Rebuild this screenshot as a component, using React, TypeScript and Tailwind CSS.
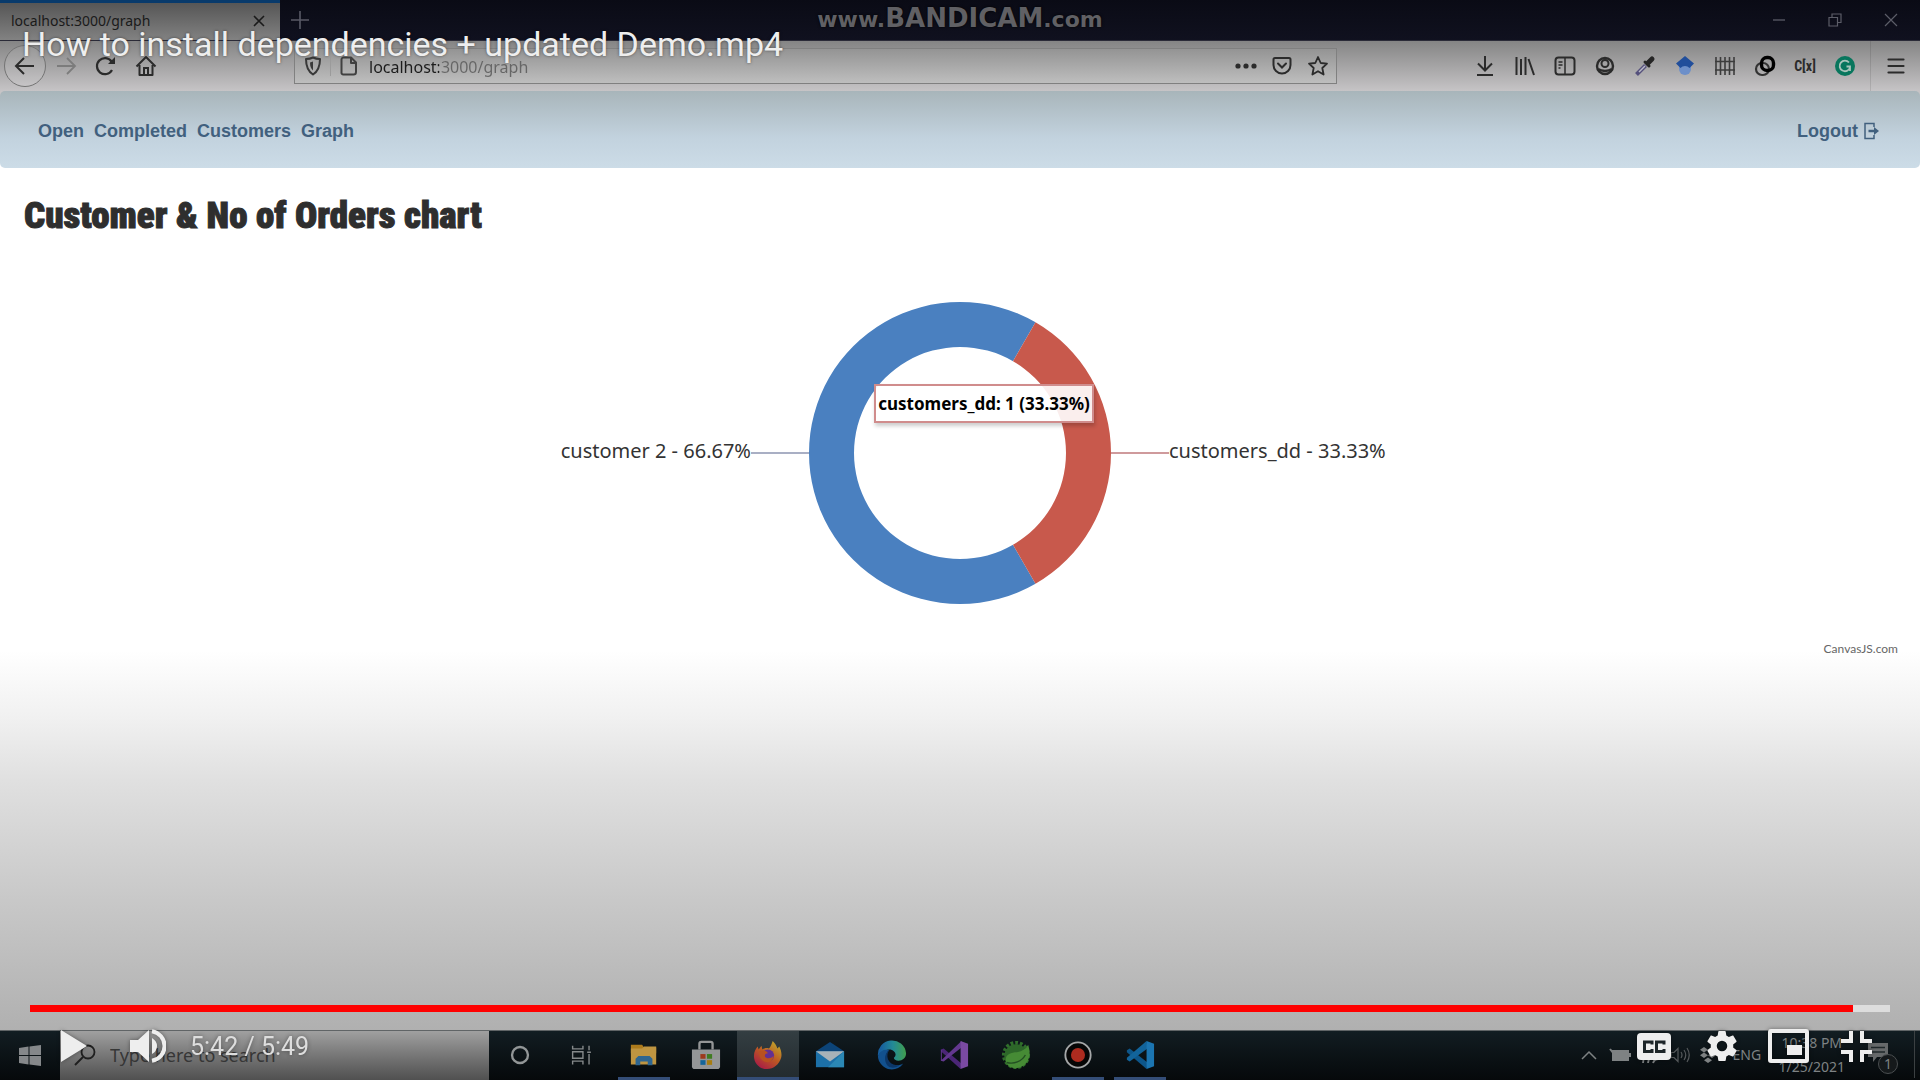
import React, { useState } from "react";

type IconProps = { children: React.ReactNode; w?: number; h?: number; box?: string; className?: string };

function Icon({ children, w = 22, h = 22, box = "0 0 22 22", className = "" }: IconProps) {
  return (
    <svg width={w} height={h} viewBox={box} fill="none" stroke="currentColor" strokeWidth={2} className={"shrink-0 " + className} aria-hidden="true">
      {children}
    </svg>
  );
}

function ToolButton({ label, children, className = "" }: { label: string; children: React.ReactNode; className?: string }) {
  return (
    <button type="button" aria-label={label} className={"flex h-10 w-10 shrink-0 items-center justify-center " + className}>
      {children}
    </button>
  );
}

function TabStrip() {
  return (
    <header className="flex h-[41px] items-stretch border-b border-[#2b2b38] bg-linear-to-b from-[#0a0b15] to-[#10111f]">
      <div className="flex w-[280px] items-center justify-between border-t-[3px] border-[#083a6b] bg-linear-to-b from-[#565656] to-[#828282] pr-3 pb-px pl-[11px] text-[#1a1a1a]">
        <span className="text-sm leading-none">localhost:3000/graph</span>
        <button type="button" aria-label="Close tab">
          <Icon w={18} h={18} box="0 0 18 18"><path d="M4 4l10 10M14 4L4 14" strokeWidth={1.6} /></Icon>
        </button>
      </div>
      <ToolButton label="New tab" className="text-[#595a66]">
        <Icon w={18} h={18} box="0 0 18 18"><path d="M9 0v18M0 9h18" strokeWidth={1.6} /></Icon>
      </ToolButton>
      <div className="ml-auto flex pr-px text-[#5c5d68]">
        <button type="button" aria-label="Minimize" className="flex w-14 items-center justify-center">
          <Icon w={14} h={14} box="0 0 14 14"><path d="M1 7h12" strokeWidth={1.3} /></Icon>
        </button>
        <button type="button" aria-label="Restore" className="flex w-14 items-center justify-center">
          <Icon w={14} h={14} box="0 0 14 14"><path d="M1 4.5h8.500v8.500H1zM4 4.500V1h9v8.500h-3.500" strokeWidth={1.2} /></Icon>
        </button>
        <button type="button" aria-label="Close" className="flex w-14 items-center justify-center">
          <Icon w={14} h={14} box="0 0 14 14"><path d="M1 1l12 12M13 1L1 13" strokeWidth={1.2} /></Icon>
        </button>
      </div>
    </header>
  );
}

function Toolbar() {
  return (
    <div className="flex h-[50px] items-center bg-linear-to-b from-[#858585] to-[#c6c4c6] px-1 text-[#2b2b2b]">
      <button type="button" aria-label="Back" className="flex h-[42px] w-[42px] shrink-0 items-center justify-center rounded-full border border-[#747474] bg-white/10">
        <Icon><path d="M20 11H2M10 3l-8 8 8 8" /></Icon>
      </button>
      <ToolButton label="Forward" className="text-[#7c7c7c]"><Icon><path d="M2 11h18M12 3l8 8-8 8" strokeWidth={1.8} /></Icon></ToolButton>
      <ToolButton label="Reload">
        <Icon><path d="M17 15a8 8 0 1 1-.5-8.500" strokeWidth={2.2} /><path d="M13 9h7V2z" fill="currentColor" stroke="none" /></Icon>
      </ToolButton>
      <ToolButton label="Home">
        <Icon><path d="M1.500 11.500L11 2l9.500 9.500M4.500 10v10h13V10" strokeLinejoin="round" /><path d="M9 19v-6h4v6" /></Icon>
      </ToolButton>
      <div className="mx-32 flex h-9 flex-1 items-center border border-[#808080] bg-linear-to-b from-[#949494] to-[#bebebe]">
        <div className="flex w-9 justify-center border-r border-[#9b9b9b] text-[#383838]">
          <Icon w={18} h={20} box="0 0 18 20"><path d="M9 1.500c2 1 4.500 1.500 7 1.500 0 7-1.500 12-7 15.500C3.500 15 2 10 2 3c2.500 0 5-.5 7-1.500z" strokeLinejoin="round" /><path d="M9 5.500v9c-2-2-3-4-3-8z" fill="currentColor" stroke="none" /></Icon>
        </div>
        <div className="flex w-9 justify-center text-[#404040]">
          <Icon w={18} h={20} box="0 0 18 20"><path d="M3.500 1.500H11l5 5V16a2.500 2.500 0 0 1-2.500 2.500h-10A2 2 0 0 1 1.500 16V3.500a2 2 0 0 1 2-2zM11 1.500V7h5" strokeLinejoin="round" /></Icon>
        </div>
        <input
          aria-label="Address"
          defaultValue="localhost:3000/graph"
          className="min-w-0 flex-1 bg-[linear-gradient(to_right,#1c1c1c_72px,#666_72px)] bg-clip-text pt-0.5 pl-0.5 text-base text-transparent outline-none"
        />
        <button type="button" aria-label="Page actions" className="flex w-9 justify-center">
          <Icon w={22} h={6} box="0 0 22 6"><g fill="currentColor" stroke="none"><circle cx="3" cy="3" r="2.600" /><circle cx="11" cy="3" r="2.600" /><circle cx="19" cy="3" r="2.600" /></g></Icon>
        </button>
        <button type="button" aria-label="Save to Pocket" className="flex w-9 justify-center">
          <Icon w={20} h={20} box="0 0 20 20"><path d="M3 2h14a1.500 1.500 0 0 1 1.500 1.500V9a8.500 8.500 0 0 1-17 0V3.500A1.500 1.500 0 0 1 3 2z" /><path d="M6 7.500l4 4 4-4" strokeLinecap="round" /></Icon>
        </button>
        <button type="button" aria-label="Bookmark this page" className="flex w-9 justify-center">
          <Icon w={22} h={22}><path d="M11 2l2.700 6 6.300.7-4.700 4.300 1.300 6.500L11 16.200 5.400 19.500 6.700 13 2 8.700 8.300 8z" strokeWidth={1.8} strokeLinejoin="round" /></Icon>
        </button>
      </div>
      <ToolButton label="Downloads"><Icon><path d="M11 1v14M4 8.500l7 7 7-7M3 20h16" /></Icon></ToolButton>
      <ToolButton label="Library"><Icon><path d="M2.500 2v18M7 4v16M11.500 2v18M14.500 4l5.500 16" /></Icon></ToolButton>
      <ToolButton label="Sidebars">
        <Icon><rect x="1.500" y="2.500" width="19" height="17" rx="3" /><path d="M11 3v16M4.500 7h4M4.500 10h4M4.500 13h2" strokeWidth={1.5} /></Icon>
      </ToolButton>
      <ToolButton label="Account">
        <Icon><circle cx="11" cy="11" r="8" strokeWidth={2.400} /><circle cx="11" cy="8.500" r="3.500" /><path d="M4 14c4 2.500 10 2.500 14 0" strokeWidth={2.500} /></Icon>
      </ToolButton>
      <ToolButton label="Color picker">
        <Icon><path d="M2.500 19.500l9-9" stroke="#55507c" strokeWidth={4} /><path d="M5 17l6-6" stroke="#b9b9c6" strokeWidth={1.500} /><path d="M11 7l4 4" stroke="#252525" strokeWidth={3} strokeLinecap="round" /><path d="M14 8l4-4" stroke="#252525" strokeWidth={5} strokeLinecap="round" /></Icon>
      </ToolButton>
      <ToolButton label="Scholar">
        <Icon><g stroke="none"><path d="M5 10v4a6 6 0 0 0 12 0v-4z" fill="#6d8fc9" /><path d="M11 1l9 7.500-4.500 4.500a6 6 0 0 0-9 0L2 8.500z" fill="#214e9b" /></g></Icon>
      </ToolButton>
      <ToolButton label="Grid">
        <Icon><path d="M2 2v18M6.500 2v18M11 2v18M15.500 2v18M20 2v18M1 6.500h20M1 15h20" stroke="#3c3c3c" strokeWidth={1.600} /></Icon>
      </ToolButton>
      <ToolButton label="Links">
        <Icon className="text-black"><rect x="2" y="8" width="13" height="12" rx="6" stroke="#333" strokeWidth={2.200} /><rect x="7.500" y="2.500" width="12" height="13" rx="5.500" strokeWidth={3.400} /></Icon>
      </ToolButton>
      <ToolButton label="Variables" className="text-sm font-bold"><span className="font-[Roboto_Condensed]">C[x]</span></ToolButton>
      <ToolButton label="Grammar check">
        <Icon><circle cx="11" cy="11" r="10" fill="#08765d" stroke="none" /><path d="M15 7.500A5.300 5.300 0 1 0 16 12.500M12.500 11.500H16V16" stroke="#a9c3ba" strokeWidth={1.800} /></Icon>
      </ToolButton>
      <div className="mx-[5px] h-full w-px bg-black/10" />
      <ToolButton label="Menu"><Icon><path d="M3.500 4.500h15M3.500 11h15M3.500 17.500h15" strokeWidth={2.200} strokeLinecap="round" /></Icon></ToolButton>
    </div>
  );
}

function SiteNav() {
  return (
    <div className="bg-linear-to-b from-[#c6c4c6] from-10% to-white to-10%">
      <nav className="flex h-[77px] items-center justify-between rounded-[5px] bg-linear-to-b from-[#a8b5ba] via-[#c2d2de] via-60% to-[#ccdce7] pt-0.5 pr-10 pl-[38px] font-[Liberation_Sans] text-lg font-bold text-[#41607e]">
        <ul className="flex gap-[10px]">
          {["Open", "Completed", "Customers", "Graph"].map((t) => (
            <li key={t}><a href="#">{t}</a></li>
          ))}
        </ul>
        <a href="#" className="flex items-center gap-[5px]">
          Logout
          <Icon w={17} h={18} box="0 0 17 18"><path d="M11 5V1.500H2v15h9V13" strokeWidth={1.500} /><path d="M5.500 9H12" strokeWidth={2.500} /><path d="M11 5l5 4-5 4z" fill="currentColor" stroke="none" /></Icon>
        </a>
      </nav>
    </div>
  );
}

const R = 151;
const r = 106;
const C = Math.cos(Math.PI / 3);
const S = Math.sin(Math.PI / 3);
const ring = (large: 0 | 1, sweep: 0 | 1) =>
  `M${R + R * C} ${R - R * S}A${R} ${R} 0 ${large} ${sweep} ${R + R * C} ${R + R * S}L${R + r * C} ${R + r * S}A${r} ${r} 0 ${large} ${sweep ? 0 : 1} ${R + r * C} ${R - r * S}Z`;

function OrdersChart() {
  return (
    <main className="flex flex-1 flex-col bg-[linear-gradient(to_bottom,#fff_56%,#f0f0f0_64%,#e0e0e0_71%,#c8c8c8_85%,#b0b0b0_100%)] pt-6">
      <h1 className="px-6 font-[Roboto_Condensed] text-[37px] leading-12 font-black text-[#2e2e2e] [-webkit-text-stroke:1px_#2e2e2e]">
        Customer &amp; No of Orders chart
      </h1>
      <section aria-label="Orders per customer" className="mt-[62px] flex items-center text-xl text-[#333]">
        <div className="flex flex-1 items-center justify-end">
          <span className="pb-1">customer 2 - 66.67%</span>
          <span className="h-[2px] w-[58px] bg-[#a9afc4]" />
        </div>
        <div className="relative">
          <svg width={302} height={302} viewBox="0 0 302 302" className="block" role="img" aria-label="Doughnut chart">
            <path d={ring(1, 0)} fill="#4a80c0" />
            <path d={ring(0, 1)} fill="#c8594c" />
          </svg>
          <div role="tooltip" className="absolute top-[82px] left-[65px] flex h-[39px] w-[220px] items-center justify-center border-2 border-[#d08c8c] bg-white/90 text-[17px] font-bold whitespace-nowrap text-black shadow-[1px_3px_4px_rgba(0,0,0,0.2)]">
            customers_dd: 1 (33.33%)
          </div>
        </div>
        <div className="flex flex-1 items-center">
          <span className="h-[2px] w-[58px] bg-[#cf9a9c]" />
          <span className="pb-1">customers_dd - 33.33%</span>
        </div>
      </section>
      <a href="#" className="mt-[35px] mr-[22px] self-end font-[Lato] text-xs leading-5 text-[#666]">CanvasJS.com</a>
    </main>
  );
}

const apps: { name: string; open?: boolean; active?: boolean; art: React.ReactNode }[] = [
  { name: "Cortana", art: <circle cx="16" cy="16" r="8.500" stroke="#929697" strokeWidth="2.500" /> },
  {
    name: "Task view",
    art: <path d="M6 6v3.500h11V6M6 26v-3.500h11V26M6 12.500h11v7H6zM23.500 6v5M23.500 15v11M21.500 13h4" stroke="#85898a" strokeWidth="1.500" />,
  },
  {
    name: "File Explorer",
    open: true,
    art: <><path d="M2 5h12l2 3h13v6H2z" fill="#ad7b1c" /><path d="M2 9h12l2-2h13v19H2z" fill="#bf9541" /><path d="M7 27v-7l3-3h12l3 3v7h-5v-4h-8v4z" fill="#2f6690" /></>,
  },
  {
    name: "Microsoft Store",
    art: <><path d="M9 10V4q0-2 2-2h10q2 0 2 2v6" stroke="#949697" strokeWidth="2.500" /><path d="M1 10h30v18q0 3-3 3H4q-3 0-3-3z" fill="#949697" /><path d="M10 15h5.500v5H10z" fill="#9d3a1d" /><path d="M17 15h5.500v5H17z" fill="#3f7c21" /><path d="M10 21.500h5.500v5H10z" fill="#14659a" /><path d="M17 21.500h5.500v5H17z" fill="#a87d10" /></>,
  },
  {
    name: "Firefox",
    open: true,
    active: true,
    art: (
      <>
        <defs>
          <linearGradient id="ff" x1="26" y1="3" x2="8" y2="29" gradientUnits="userSpaceOnUse"><stop stopColor="#bfa42b" /><stop offset=".5" stopColor="#bd5a22" /><stop offset="1" stopColor="#aa2043" /></linearGradient>
        </defs>
        <path d="M21 1c3 3 4 5 5 8l2-2c2 4 3 8 2 12-2 7-8 12-15 12C7 31 1 25 1 17c0-4 2-8 4-10l1 3 3-4 1 4c2-1 4-2 7-1 2-2 3-5 4-8z" fill="url(#ff)" />
        <circle cx="16" cy="16.500" r="6.500" fill="#633092" />
        <path d="M7 12c4-2 8 0 9 2-3 0-4 2-3 4 2 2 6 2 9-1-1 6-6 8-10 6s-6-6-5-11z" fill="#b95120" />
      </>
    ),
  },
  {
    name: "Mail",
    art: <><path d="M1 12L16 2l15 10v6H1z" fill="#0c4478" /><path d="M1 12h30v17H1z" fill="#1c70a8" /><path d="M1 12h30L16 23z" fill="#a8b2b8" /><path d="M31 12v17H14z" fill="#2b88b5" /></>,
  },
  {
    name: "Edge",
    art: (
      <>
        <defs>
          <linearGradient id="ed" x1="4" y1="10" x2="30" y2="10" gradientUnits="userSpaceOnUse"><stop stopColor="#175f9f" /><stop offset=".5" stopColor="#238a96" /><stop offset="1" stopColor="#3f9d52" /></linearGradient>
        </defs>
        <path d="M1 17A15 15 0 0 1 31 14c0 5-4 8-8 8-3 0-5-1-5-3 4-3 1-9-5-9-6 0-10 4-12 7z" fill="url(#ed)" />
        <path d="M1 17c2-5 7-8 12-6-5 3-5 16 8 16 3 0 5-1 7-2-5 7-14 8-20 4-4-3-7-7-7-12z" fill="#12518e" />
        <path d="M13 11c-4 5-2 15 8 16h3c-5 4-13 4-15-4-1-5 0-9 4-12z" fill="#0c3768" />
      </>
    ),
  },
  {
    name: "Visual Studio",
    art: <><path d="M2 10l3-1 19 16-1 6L2 12z" fill="#4b2677" /><path d="M2 10v12l3 1L24 8V1L3 21V11z" fill="#63388f" /><path d="M23 1l8 3v24l-8 3z" fill="#7a4aa2" /></>,
  },
  {
    name: "Spring Tools",
    art: <><circle cx="16" cy="16" r="13" stroke="#306e2b" strokeWidth="4" strokeDasharray="3 2" /><circle cx="16" cy="17" r="12.500" fill="#2d6729" /><path d="M29 5c4 12 0 24-13 25C9 30 5 26 5 21c0-6 6-8 12-8 6-1 10-4 12-8z" fill="#468b35" /><path d="M6 24c8 2 16-1 20-8" stroke="#234f23" strokeWidth="1.500" /></>,
  },
  {
    name: "Bandicam",
    open: true,
    art: <><circle cx="16" cy="16" r="13.500" fill="#060606" stroke="#a5a7a8" strokeWidth="2" /><circle cx="16" cy="16" r="7.500" fill="#ad2b1f" /></>,
  },
  {
    name: "Visual Studio Code",
    open: true,
    art: <><path d="M2 11l3-2 19 15-1 7L2 13z" fill="#0d568a" /><path d="M2 21l3 2L24 9l-1-8L2 19z" fill="#12649b" /><path d="M23 1l8 3v24l-8 3z" fill="#1b75b1" /></>,
  },
];

function Taskbar() {
  return (
    <footer className="flex h-[50px] items-stretch border-t border-[#606466] bg-linear-to-b from-[#121d22] to-[#06090b] text-[#7e8283]">
      <button type="button" aria-label="Start" className="flex w-[60px] shrink-0 items-center justify-center">
        <Icon w={22} h={21} box="0 0 22 21" className="text-[#85888a]"><path d="M0 3l9.500-1.400V10H0zM10.500 1.500L22 0v10H10.500zM0 11h9.500v8.400L0 18zM10.500 11H22v10l-11.500-1.600z" fill="currentColor" stroke="none" /></Icon>
      </button>
      <label className="flex w-[429px] shrink-0 items-center gap-[14px] bg-linear-to-b from-[#a0a0a0] to-[#505050] pb-0.5 pl-[14px] text-[#1f1f1f]">
        <Icon w={22} h={22}><circle cx="14" cy="8" r="6.500" strokeWidth={1.800} /><path d="M9 13l-8 8" /></Icon>
        <input aria-label="Search" placeholder="Type here to search" className="w-full bg-transparent text-lg outline-none placeholder:text-[#363636]" />
      </label>
      <div className="flex">
        {apps.map((a) => (
          <button key={a.name} type="button" aria-label={a.name} className={"relative flex w-[62px] items-center justify-center pb-0.5 " + (a.active ? "bg-linear-to-b from-[#343e42] to-[#222a2e]" : "")}>
            <svg width={30} height={30} viewBox="0 0 32 32" fill="none" aria-hidden="true">{a.art}</svg>
            {a.open && <span className={"absolute bottom-0 h-[3px] bg-[#344d77] " + (a.active ? "inset-x-0" : "inset-x-[5px]")} />}
          </button>
        ))}
      </div>
      <div className="ml-auto flex items-center pr-[5px] pb-0.5 text-sm">
        <Icon w={16} h={10} box="0 0 16 10" className="mr-3"><path d="M1 9l7-7 7 7" strokeWidth={1.500} /></Icon>
        <Icon w={22} h={14} box="0 0 22 14" className="mr-[10px]"><path d="M4 3h15v9H4zM20 6h1v3" fill="currentColor" /><path d="M1 1l4 5" /></Icon>
        <Icon w={20} h={18} box="0 0 20 18" className="mr-[9px]"><path d="M2 17A15 15 0 0 1 18 3M7 17A10 10 0 0 1 18 8M12 17a6 6 0 0 1 6-4" strokeWidth={1.800} /></Icon>
        <Icon w={20} h={16} box="0 0 20 16" className="mr-[10px] text-[#55595b]"><path d="M1 5.500h3l4-4v13l-4-4H1zM11 5q2 3 0 6M14 3q3.500 5 0 10M17 1q4.500 7 0 14" strokeWidth={1.200} /></Icon>
        <Icon w={16} h={16} box="0 0 16 16" className="mr-[17px]"><path d="M4 0l4 2.700L4 5.400 0 2.700zM12 0l4 2.700-4 2.700-4-2.700zM4 5.500l4 2.700-4 2.700L0 8.200zM12 5.500l4 2.700-4 2.700-4-2.700zM8 10.500l4 2.700L8 16l-4-2.800z" fill="currentColor" stroke="none" /></Icon>
        <span className="w-[46px]">ENG</span>
        <time className="mr-[23px] flex flex-col items-center leading-6"><span>10:38 PM</span><span>1/25/2021</span></time>
        <button type="button" aria-label="Notifications, 1 new" className="relative mr-4 flex h-full w-[30px] items-center">
          <Icon w={20} h={19} box="0 0 20 19" className="mb-1"><path d="M0 0h20v14H9l-4 5v-5H0z" fill="#66696a" stroke="none" /><path d="M3 4.500h14M3 9h14" stroke="#20282b" strokeWidth={1.500} /></Icon>
          <span className="absolute right-0 bottom-1 flex h-5 w-5 items-center justify-center rounded-full border border-[#4a4e50] bg-[#15191b] text-sm">1</span>
        </button>
        <span className="h-full w-px bg-[#3b4042]" />
      </div>
    </footer>
  );
}

function Player() {
  const total = 349;
  const [at, setAt] = useState(342);
  const pct = (at / total) * 100;
  return (
    <div className="absolute inset-0 flex flex-col font-[Roboto] text-[#eee]">
      <div className="relative px-[22px] pt-7">
        <h2 className="text-[34px] leading-8 [text-shadow:0_0_3px_rgba(0,0,0,0.5)]">How to install dependencies + updated Demo.mp4</h2>
        <p className="absolute inset-x-0 top-0 flex h-9 items-baseline justify-center font-[DejaVu_Sans] text-[22px] leading-9 font-bold text-[#606064] [text-shadow:0_0_3px_#000]">
          www.<span className="text-[26px]">BANDICAM</span>.com
        </p>
      </div>
      <input
        type="range"
        aria-label="Seek"
        min={0}
        max={total}
        value={at}
        onChange={(e) => setAt(Number(e.target.value))}
        style={{ background: `linear-gradient(to right, #f00 ${pct}%, #ddd ${pct}%)` }}
        className="mx-[30px] mt-auto h-[7px] appearance-none [&::-webkit-slider-thumb]:w-0 [&::-webkit-slider-thumb]:appearance-none"
      />
      <div className="flex h-[68px] items-center pr-12 pl-[61px] drop-shadow-[0_0_2px_rgba(0,0,0,0.4)]">
        <button type="button" aria-label="Play" className="mr-[43px]"><Icon w={26} h={32} box="0 0 26 32"><path d="M0 0l26 16L0 32z" fill="currentColor" stroke="none" /></Icon></button>
        <button type="button" aria-label="Mute" className="mr-6">
          <Icon w={36} h={34} box="0 0 36 34"><path d="M0 11h8L19 1v32L8 23H0zM22 9q5 3 5 8t-5 8z" fill="currentColor" stroke="none" /><path d="M22 2.200a15 15 0 0 1 0 29.600" strokeWidth={4} /></Icon>
        </button>
        <span className="pt-0.5 text-[25px] text-[#ddd]">5:42 / 5:49</span>
        <button type="button" aria-label="Captions" className="mr-9 ml-auto">
          <Icon w={34} h={27} box="0 0 34 27"><rect width="34" height="27" rx="4" fill="currentColor" stroke="none" /><path d="M15 11.500V9H7.500v9.500H15V16M27 11.500V9h-7.500v9.500H27V16" stroke="#1d2528" strokeWidth={3} /></Icon>
        </button>
        <button type="button" aria-label="Settings" className="mr-[31px]">
          <Icon w={30} h={30} box="2.200 2 19.600 20"><path fill="currentColor" stroke="none" d="M19.430 12.980c.04-.32.07-.64.07-.98s-.03-.66-.07-.98l2.110-1.650c.19-.15.24-.42.12-.64l-2-3.460c-.12-.22-.39-.3-.61-.22l-2.490 1c-.52-.4-1.080-.73-1.690-.98l-.38-2.650C14.460 2.180 14.250 2 14 2h-4c-.25 0-.46.18-.49.42l-.38 2.650c-.61.25-1.170.59-1.690.98l-2.490-1c-.23-.09-.49 0-.61.22l-2 3.460c-.13.22-.07.49.12.64l2.110 1.650c-.04.32-.07.65-.07.98s.03.66.07.98l-2.110 1.650c-.19.15-.24.42-.12.64l2 3.460c.12.22.39.3.61.22l2.490-1c.52.4 1.080.73 1.690.98l.38 2.650c.03.24.24.42.49.42h4c.25 0 .46-.18.49-.42l.38-2.650c.61-.25 1.170-.59 1.690-.98l2.490 1c.23.09.49 0 .61-.22l2-3.460c.12-.22.07-.49-.12-.64l-2.110-1.650zM12 15.500a3.500 3.500 0 1 1 0-7 3.500 3.500 0 0 1 0 7z" /></Icon>
        </button>
        <button type="button" aria-label="Miniplayer" className="mr-8">
          <Icon w={41} h={34} box="0 0 41 34"><rect x="2" y="2" width="37" height="30" rx="1" strokeWidth={4} /><path d="M19 16h15v10H19z" fill="currentColor" stroke="none" /></Icon>
        </button>
        <button type="button" aria-label="Exit full screen">
          <Icon w={31} h={31} box="0 0 31 31"><path d="M10 0v10H0M21 0v10h10M10 31V21H0M21 31V21h10" strokeWidth={4} /></Icon>
        </button>
      </div>
    </div>
  );
}

export default function App() {
  return (
    <div className="relative flex min-h-screen flex-col bg-white font-[Noto_Sans]">
      <TabStrip />
      <Toolbar />
      <SiteNav />
      <OrdersChart />
      <Taskbar />
      <Player />
    </div>
  );
}
